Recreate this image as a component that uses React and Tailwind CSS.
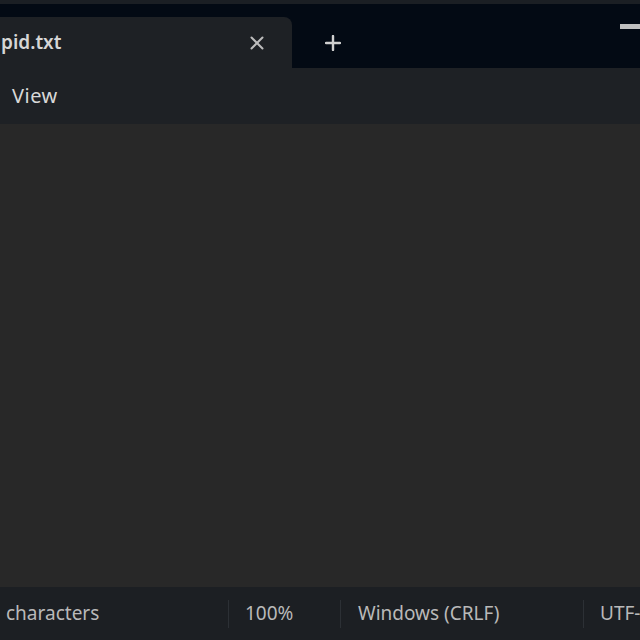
export default function App() {
  const font = { fontFamily: '"Noto Sans", "Open Sans", sans-serif' };
  return (
    <div className="w-[640px] h-[640px] overflow-hidden flex flex-col bg-[#282828]" style={font}>
      <div className="h-[4px] bg-[#1b1f24]" />
      <div className="h-[64px] bg-[#030a14] flex items-end relative">
        <div className="h-[51px] w-[292px] bg-[#1e2125] rounded-tr-[8px] flex items-center">
          <span className="ml-[1px] text-[19px] font-semibold text-[#d6d6d6] whitespace-nowrap">pid.txt</span>
          <div className="ml-auto mr-[28px]">
            <svg width="14" height="14" viewBox="0 0 14 14">
              <path d="M1.5 1.5 L12.5 12.5 M12.5 1.5 L1.5 12.5" stroke="#bdbdbd" strokeWidth="2" strokeLinecap="round" />
            </svg>
          </div>
        </div>
        <div className="h-[51px] flex items-center ml-[33px]">
          <svg width="16" height="16" viewBox="0 0 16 16">
            <path d="M8 1 V15 M1 8 H15" stroke="#d0d0d0" strokeWidth="2.4" strokeLinecap="round" />
          </svg>
        </div>
        <div className="absolute left-[620px] top-[20px] w-[30px] h-[5px] bg-[#c0c0c0]" />
      </div>
      <div className="h-[56px] bg-[#1e2125] flex items-center pl-[12px]">
        <span className="text-[20px] text-[#d8d8d8] tracking-[0.5px]">View</span>
      </div>
      <div className="flex-1 bg-[#282828]" />
      <div className="h-[53px] bg-[#1c1f23] flex items-center text-[19px] text-[#b9b9b9] whitespace-nowrap">
        <span className="shrink-0 ml-[6px] w-[222px]">characters</span>
        <div className="shrink-0 w-[1px] h-[28px] bg-[#2c3035]" />
        <span className="shrink-0 ml-[16px] w-[95px]">100%</span>
        <div className="shrink-0 w-[1px] h-[28px] bg-[#2c3035]" />
        <span className="shrink-0 ml-[17px] w-[225px]">Windows (CRLF)</span>
        <div className="shrink-0 w-[1px] h-[28px] bg-[#2c3035]" />
        <span className="shrink-0 ml-[16px]">UTF-8</span>
      </div>
    </div>
  );
}
